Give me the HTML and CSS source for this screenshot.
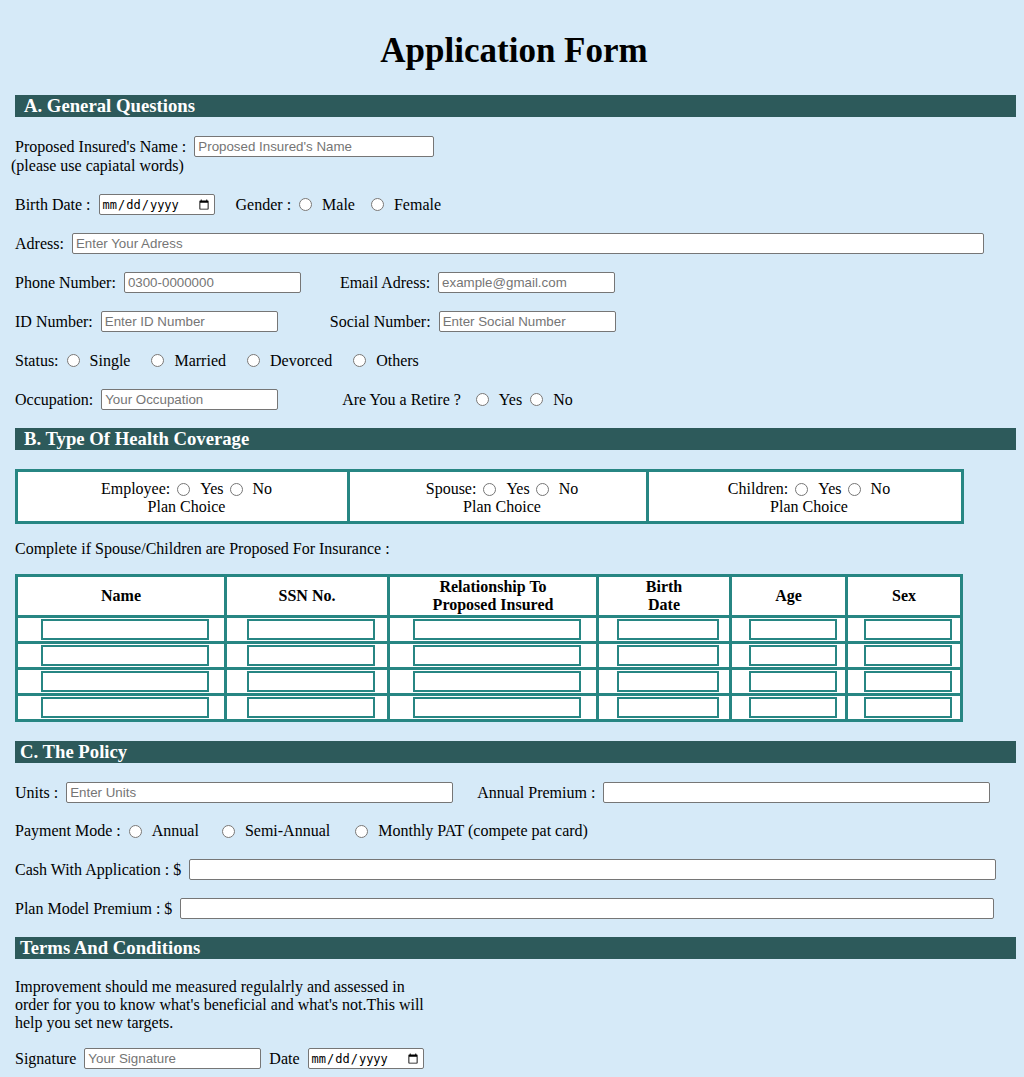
FILE: index.html
```html
<!DOCTYPE html>
<html lang="en">
<head>
<meta charset="utf-8">
<title>Application Form</title>
<link rel="stylesheet" href="styles.css">
</head>
<body>
<div class="page">
  <h1 class="title">Application Form</h1>
  <form class="form">
    <h3 class="bar">A. General Questions</h3>
    <div class="row row-name">
      <label class="lbl" for="pname">Proposed Insured's Name :</label>
      <input class="txt w240" id="pname" type="text" placeholder="Proposed Insured's Name">
    </div>
    <div class="note">(please use capiatal words)</div>
    <div class="row">
      <label class="lbl" for="bdate">Birth Date :</label>
      <input class="date" id="bdate" type="date">
      <span class="lbl ml21">Gender :</span>
      <input class="r" type="radio" name="gender"><span>Male</span>
      <input class="r g16" type="radio" name="gender"><span>Female</span>
    </div>
    <div class="row">
      <label class="lbl" for="adr">Adress:</label>
      <input class="txt w912" id="adr" type="text" placeholder="Enter Your Adress">
    </div>
    <div class="row">
      <label class="lbl" for="phone">Phone Number:</label>
      <input class="txt w177" id="phone" type="text" placeholder="0300-0000000">
      <label class="lbl ml39" for="email">Email Adress:</label>
      <input class="txt w177" id="email" type="text" placeholder="example@gmail.com">
    </div>
    <div class="row">
      <label class="lbl" for="idn">ID Number:</label>
      <input class="txt w177" id="idn" type="text" placeholder="Enter ID Number">
      <label class="lbl ml52" for="soc">Social Number:</label>
      <input class="txt w177" id="soc" type="text" placeholder="Enter Social Number">
    </div>
    <div class="row">
      <span class="lbl">Status:</span>
      <input class="r" type="radio" name="status"><span>Single</span>
      <input class="r g21" type="radio" name="status"><span>Married</span>
      <input class="r g21" type="radio" name="status"><span>Devorced</span>
      <input class="r g21" type="radio" name="status"><span>Others</span>
    </div>
    <div class="row">
      <label class="lbl" for="occ">Occupation:</label>
      <input class="txt w177" id="occ" type="text" placeholder="Your Occupation">
      <span class="lbl ml64">Are You a Retire ?</span>
      <input class="r g15" type="radio" name="retire"><span>Yes</span>
      <input class="r g8" type="radio" name="retire"><span>No</span>
    </div>

    <h3 class="bar">B. Type Of Health Coverage</h3>
    <div class="cover">
      <div class="cover-cell">
        <div class="cover-line">
          <span>Employee:</span>
          <input class="r g7" type="radio" name="emp"><span>Yes</span>
          <input class="r g6" type="radio" name="emp"><span>No</span>
        </div>
        <div class="cover-line">Plan Choice</div>
      </div>
      <div class="cover-cell">
        <div class="cover-line">
          <span>Spouse:</span>
          <input class="r g7" type="radio" name="sp"><span>Yes</span>
          <input class="r g6" type="radio" name="sp"><span>No</span>
        </div>
        <div class="cover-line">Plan Choice</div>
      </div>
      <div class="cover-cell">
        <div class="cover-line">
          <span>Children:</span>
          <input class="r g7" type="radio" name="ch"><span>Yes</span>
          <input class="r g6" type="radio" name="ch"><span>No</span>
        </div>
        <div class="cover-line">Plan Choice</div>
      </div>
    </div>
    <p class="intro">Complete if Spouse/Children are Proposed For Insurance :</p>
    <div class="deps">
      <div class="th">Name</div>
      <div class="th">SSN No.</div>
      <div class="th">Relationship To<br>Proposed Insured</div>
      <div class="th">Birth<br>Date</div>
      <div class="th">Age</div>
      <div class="th">Sex</div>

      <div class="td"><input class="cin wi168" type="text"></div>
      <div class="td"><input class="cin wi128" type="text"></div>
      <div class="td"><input class="cin wi168" type="text"></div>
      <div class="td"><input class="cin wi102" type="text"></div>
      <div class="td"><input class="cin wi88" type="text"></div>
      <div class="td"><input class="cin wi88" type="text"></div>

      <div class="td"><input class="cin wi168" type="text"></div>
      <div class="td"><input class="cin wi128" type="text"></div>
      <div class="td"><input class="cin wi168" type="text"></div>
      <div class="td"><input class="cin wi102" type="text"></div>
      <div class="td"><input class="cin wi88" type="text"></div>
      <div class="td"><input class="cin wi88" type="text"></div>

      <div class="td"><input class="cin wi168" type="text"></div>
      <div class="td"><input class="cin wi128" type="text"></div>
      <div class="td"><input class="cin wi168" type="text"></div>
      <div class="td"><input class="cin wi102" type="text"></div>
      <div class="td"><input class="cin wi88" type="text"></div>
      <div class="td"><input class="cin wi88" type="text"></div>

      <div class="td"><input class="cin wi168" type="text"></div>
      <div class="td"><input class="cin wi128" type="text"></div>
      <div class="td"><input class="cin wi168" type="text"></div>
      <div class="td"><input class="cin wi102" type="text"></div>
      <div class="td"><input class="cin wi88" type="text"></div>
      <div class="td"><input class="cin wi88" type="text"></div>
    </div>

    <h3 class="bar bar-tight">C. The Policy</h3>
    <div class="row">
      <label class="lbl" for="units">Units :</label>
      <input class="txt w387" id="units" type="text" placeholder="Enter Units">
      <label class="lbl ml24" for="prem">Annual Premium :</label>
      <input class="txt w387" id="prem" type="text">
    </div>
    <div class="row row-20">
      <span class="lbl">Payment Mode :</span>
      <input class="r" type="radio" name="pay"><span>Annual</span>
      <input class="r g23" type="radio" name="pay"><span>Semi-Annual</span>
      <input class="r g25" type="radio" name="pay"><span>Monthly PAT (compete pat card)</span>
    </div>
    <div class="row">
      <label class="lbl" for="cash">Cash With Application : $</label>
      <input class="txt w807" id="cash" type="text">
    </div>
    <div class="row">
      <label class="lbl" for="plan">Plan Model Premium : $</label>
      <input class="txt w814" id="plan" type="text">
    </div>

    <h3 class="bar bar-tight">Terms And Conditions</h3>
    <p class="terms">Improvement should me measured regulalrly and assessed in order for you to know what's beneficial and what's not.This will help you set new targets.</p>
    <div class="row sig">
      <label class="lbl" for="sign">Signature</label>
      <input class="txt w177" id="sign" type="text" placeholder="Your Signature">
      <label class="lbl ml8" for="sdate">Date</label>
      <input class="date" id="sdate" type="date">
    </div>
  </form>
</div>
</body>
</html>
```

FILE: styles.css
```css
* {
  box-sizing: border-box;
}

body {
  margin: 0;
  background: #d6eaf8;
  font-family: "Liberation Serif", "Times New Roman", serif;
  font-size: 16px;
  line-height: 18px;
  color: #000;
}

.page {
  padding: 8px;
}

.title {
  font-size: 35px;
  line-height: 40px;
  font-weight: bold;
  text-align: center;
  margin: 23px 0 24px;
  padding-left: 4px;
}

.form {
  margin-left: 7px;
}

.bar {
  background: #2d5a5b;
  color: #fff;
  font-size: 18.72px;
  line-height: 22px;
  height: 22px;
  font-weight: bold;
  margin: 18px 0 19px;
  padding-left: 9px;
}

.bar-tight {
  padding-left: 5px;
}

.row {
  display: flex;
  align-items: center;
  height: 21px;
  margin: 18px 0;
  white-space: nowrap;
}

.row-name {
  margin-bottom: 0;
}

.row-20 {
  height: 20px;
}

.sig {
  margin-top: 16px;
}

.note {
  margin: 0 0 19px -4px;
}

.lbl {
  margin: 0;
}

.ml8 { margin-left: 8px; }
.ml21 { margin-left: 21px; }
.ml24 { margin-left: 24px; }
.ml39 { margin-left: 39px; }
.ml52 { margin-left: 52px; }
.ml64 { margin-left: 64px; }

.txt {
  height: 21px;
  margin: 0 0 0 8px;
  padding: 1px 3px;
  border: 1px solid #767676;
  border-radius: 2px;
  background: #fff;
  font-family: "Liberation Sans", Arial, sans-serif;
  font-size: 13.333px;
  color: #000;
}

.txt::placeholder {
  color: #757575;
}

.w177 { width: 177px; }
.w240 { width: 240px; }
.w387 { width: 387px; }
.w807 { width: 807px; }
.w814 { width: 814px; }
.w912 { width: 912px; }

.date {
  width: 116px;
  height: 21px;
  margin: 0 0 0 8px;
  padding: 1px 2px;
  border: 1px solid #767676;
  border-radius: 2px;
  background: #fff;
  font-family: "DejaVu Sans Mono", "Liberation Mono", monospace;
  font-size: 12px;
  color: #000;
}

.r {
  width: 13px;
  height: 13px;
  margin: 0 10px 0 8px;
  flex: none;
}

.g6 { margin-left: 6px; }
.g7 { margin-left: 7px; }
.g8 { margin-left: 8px; }
.g15 { margin-left: 15px; }
.g16 { margin-left: 16px; }
.g21 { margin-left: 21px; }
.g23 { margin-left: 23px; }
.g25 { margin-left: 25px; }

.cover {
  display: grid;
  grid-template-columns: 329px 296px 312px;
  gap: 3px;
  padding: 3px;
  width: 949px;
  background: #278683;
  margin: 19px 0 16px;
}

.cover-cell {
  background: #fff;
  padding: 8px 0 5px 8px;
  text-align: center;
}

.cover-line {
  display: flex;
  justify-content: center;
  align-items: center;
  height: 18px;
  white-space: nowrap;
}

.intro {
  margin: 16px 0;
}

.deps {
  display: grid;
  grid-template-columns: 206px 160px 206px 130px 113px 112px;
  grid-template-rows: 38px repeat(4, 23px);
  gap: 3px;
  padding: 3px;
  width: 948px;
  background: #278683;
  margin: 16px 0 19px;
}

.th {
  background: #fff;
  font-weight: bold;
  display: flex;
  align-items: center;
  justify-content: center;
  text-align: center;
}

.td {
  background: #fff;
  display: flex;
  align-items: center;
  justify-content: center;
  padding-left: 8px;
}

.cin {
  height: 21px;
  border: 2px solid #278683;
  background: #fff;
  padding: 0 2px;
  margin: 0;
  font-family: "Liberation Sans", Arial, sans-serif;
  font-size: 13.333px;
}

.wi168 { width: 168px; }
.wi128 { width: 128px; }
.wi102 { width: 102px; }
.wi88 { width: 88px; }

.terms {
  width: 420px;
  margin: 19px 0 16px;
}
```
